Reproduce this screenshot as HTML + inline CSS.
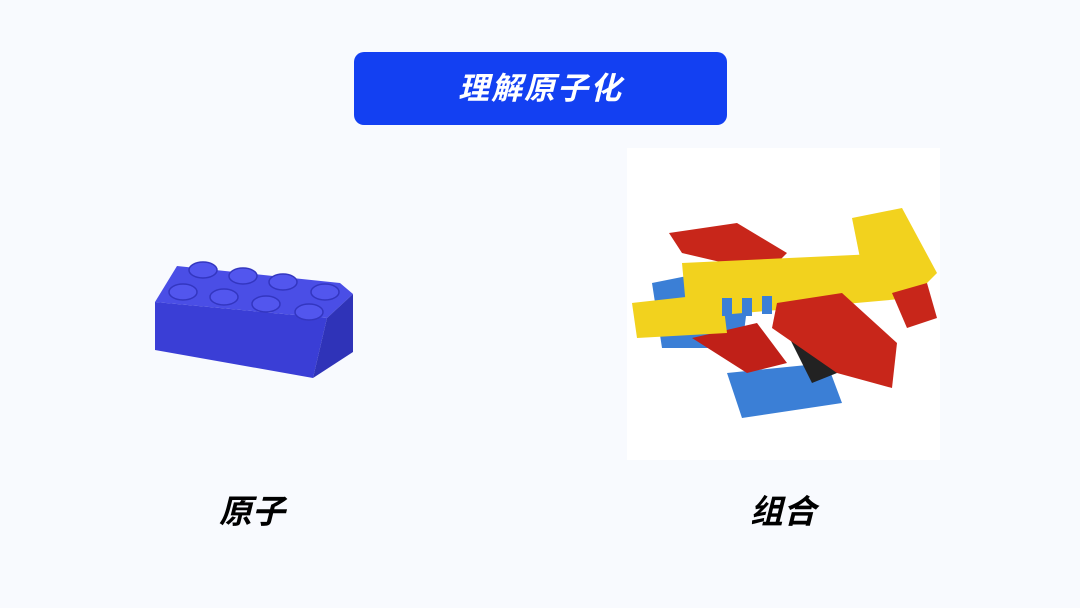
<!DOCTYPE html>
<html><head><meta charset="utf-8"><style>
body{margin:0;width:1080px;height:608px;background:#f8fafe;position:relative;overflow:hidden;font-family:"Liberation Sans","Noto Sans CJK SC",sans-serif}
.btn{position:absolute;left:354px;top:52px;width:373px;height:73px;background:#1340f2;border-radius:10px;color:#fff;font-size:31px;font-weight:bold;font-style:italic;text-align:center;line-height:73px;letter-spacing:2px}
.lbl{position:absolute;top:490px;font-size:33px;font-weight:bold;font-style:italic;color:#000;line-height:44px}
.pic{position:absolute;left:627px;top:148px;width:313px;height:312px;background:#fff}
</style></head><body>
<div class="btn">理解原子化</div>
<svg style="position:absolute;left:0;top:0" width="1080" height="608">
<!-- brick -->
<polygon points="177,266 340,283 353,294 327,318 155,302" fill="#4a4ee6"/>
<polygon points="155,302 327,318 313,378 155,350" fill="#3a3ed6"/>
<polygon points="327,318 353,294 353,352 313,378" fill="#2f33b8"/>
<g fill="#5256ee" stroke="#3336c0" stroke-width="1.5">
<ellipse cx="203" cy="270" rx="14" ry="8"/><ellipse cx="243" cy="276" rx="14" ry="8"/><ellipse cx="283" cy="282" rx="14" ry="8"/><ellipse cx="325" cy="292" rx="14" ry="8"/>
<ellipse cx="183" cy="292" rx="14" ry="8"/><ellipse cx="224" cy="297" rx="14" ry="8"/><ellipse cx="266" cy="304" rx="14" ry="8"/><ellipse cx="309" cy="312" rx="14" ry="8"/>
</g>
</svg>
<div class="pic">
<svg width="313" height="312">
<polygon points="25,135 75,125 120,160 115,200 35,200" fill="#3b7fd6"/>
<polygon points="100,225 200,215 215,255 115,270" fill="#3b7fd6"/>
<polygon points="42,85 110,75 160,105 140,125 55,105" fill="#c8261a"/>
<polygon points="65,190 130,175 160,215 120,225" fill="#c02018"/>
<polygon points="150,165 205,150 235,215 185,235" fill="#222"/>
<polygon points="55,115 270,105 285,150 60,170" fill="#f2d21e"/>
<polygon points="5,155 95,145 100,185 10,190" fill="#f2d21e"/>
<polygon points="225,70 275,60 310,125 285,150 235,120" fill="#f2d21e"/>
<polygon points="150,155 215,145 270,195 265,240 210,225 145,180" fill="#c8261a"/>
<polygon points="265,145 300,135 310,170 280,180" fill="#c8261a"/>
<g fill="#3b7fd6"><rect x="95" y="150" width="10" height="18"/><rect x="115" y="150" width="10" height="18"/><rect x="135" y="148" width="10" height="18"/></g>
</svg></div>
<div class="lbl" style="left:219px">原子</div>
<div class="lbl" style="left:750px">组合</div>
</body></html>
